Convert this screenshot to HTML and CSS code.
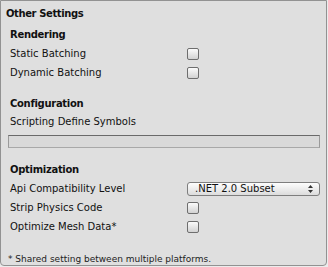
FILE: index.html
```html
<!DOCTYPE html>
<html lang="en">
<head>
    <meta charset="UTF-8">
    <title>Other Settings</title>
    <link rel="stylesheet" href="styles.css">
</head>
<body>
    <div class="panel">
        <div class="panel-title">Other Settings</div>

        <!-- Rendering -->
        <div class="section">
            <div class="section-head">Rendering</div>
            <div class="row">
                <span class="label">Static Batching</span>
                <span class="checkbox"></span>
            </div>
            <div class="row">
                <span class="label">Dynamic Batching</span>
                <span class="checkbox"></span>
            </div>
        </div>

        <!-- Configuration -->
        <div class="section section-gap">
            <div class="section-head">Configuration</div>
            <div class="row-label">Scripting Define Symbols</div>
        </div>
        <div class="text-field"></div>

        <!-- Optimization -->
        <div class="section section-gap">
            <div class="section-head">Optimization</div>
            <div class="row">
                <span class="label">Api Compatibility Level</span>
                <span class="dropdown">
                    <span class="dropdown-text">.NET 2.0 Subset</span>
                    <svg class="dropdown-arrows" width="5" height="8" viewBox="0 0 5 8">
                        <path d="M2.5 0 L5 3 L0 3 Z M0 5 L5 5 L2.5 8 Z" fill="#333"/>
                    </svg>
                </span>
            </div>
            <div class="row">
                <span class="label">Strip Physics Code</span>
                <span class="checkbox"></span>
            </div>
            <div class="row">
                <span class="label">Optimize Mesh Data*</span>
                <span class="checkbox"></span>
            </div>
        </div>

        <div class="note">* Shared setting between multiple platforms.</div>
    </div>
</body>
</html>
```

FILE: styles.css
```css
* {
    margin: 0;
    padding: 0;
    box-sizing: border-box;
}

body {
    font-family: "DejaVu Sans", sans-serif;
    font-size: 10px;
    color: #111;
    background: #ececec;
}

.panel {
    width: 327px;
    height: 266px;
    background: #dfdfdf;
    border: 1px solid #929292;
    border-radius: 0 0 4px 4px;
    padding: 3px 0 0 5px;
}

.panel-title {
    font-weight: bold;
    letter-spacing: -0.4px;
    line-height: 19px;
}

.section {
    padding-left: 4px;
    margin-top: 2px;
}

.section-gap {
    margin-top: 12px;
}

.section-head {
    font-weight: bold;
    letter-spacing: -0.3px;
    line-height: 19px;
}

.row {
    display: flex;
    align-items: center;
    height: 19px;
}

.label {
    width: 177px;
    flex-shrink: 0;
}

.row-label {
    line-height: 17px;
}

.checkbox {
    width: 12px;
    height: 12px;
    border: 1px solid #6e6e6e;
    border-radius: 2px;
    background: linear-gradient(#fbfbfb, #d2d2d2);
}

.text-field {
    width: 312px;
    height: 13px;
    margin: 5px 0 0 2px;
    background: #d9d9d9;
    border: 1px solid #9a9a9a;
    border-top-color: #6a6a6a;
    border-bottom-color: #a8a8a8;
}

.dropdown {
    width: 133px;
    height: 14px;
    display: flex;
    align-items: center;
    justify-content: space-between;
    padding: 0 6px 0 7px;
    border: 1px solid #7e7e7e;
    border-radius: 3px;
    background: linear-gradient(#fdfdfd, #dcdcdc);
    font-size: 10px;
    line-height: 12px;
}

.note {
    font-size: 9px;
    color: #222;
    margin: 17px 0 0 2px;
    line-height: 12px;
}
```
